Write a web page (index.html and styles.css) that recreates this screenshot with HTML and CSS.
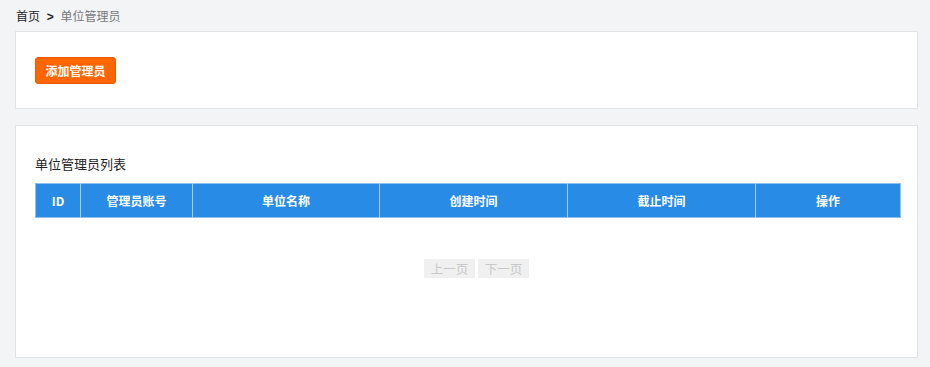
FILE: index.html
```html
<!DOCTYPE html>
<html lang="zh-CN">
<head>
  <meta charset="UTF-8">
  <title>单位管理员</title>
  <link rel="stylesheet" href="styles.css">
</head>
<body>

  <div class="crumb">
    <span class="crumb-home">首页</span>
    <span class="crumb-sep">&gt;</span>
    <span class="crumb-cur">单位管理员</span>
  </div>

  <div class="panel panel-top">
    <button class="add-btn">添加管理员</button>
  </div>

  <div class="panel panel-list">
    <h3 class="list-title">单位管理员列表</h3>
    <table class="admin-table">
      <thead>
        <tr>
          <th class="col-id">ID</th>
          <th class="col-account">管理员账号</th>
          <th class="col-unit">单位名称</th>
          <th class="col-time">创建时间</th>
          <th class="col-time">截止时间</th>
          <th>操作</th>
        </tr>
      </thead>
      <tbody></tbody>
    </table>

    <div class="pager">
      <button class="pager-btn" disabled>上一页</button>
      <button class="pager-btn" disabled>下一页</button>
    </div>
  </div>

</body>
</html>
```

FILE: styles.css
```css
body {
  margin: 0;
  padding: 0 12px 0 15px;
  background: #f3f4f6;
  color: #333;
  font-family: "Noto Sans CJK SC", "Liberation Sans", sans-serif;
  font-size: 12px;
}

.crumb {
  height: 31px;
  line-height: 31px;
  padding-left: 1px;
  color: #222;
}

.crumb-sep {
  margin: 0 4px;
  font-weight: bold;
  font-family: "Liberation Sans", sans-serif;
}

.crumb-cur {
  color: #777;
}

.panel {
  background: #fff;
  border: 1px solid #e2e3e5;
  box-sizing: border-box;
}

.panel-top {
  height: 78px;
  padding: 25px 19px 0;
}

.add-btn {
  width: 81px;
  height: 27px;
  background: #ff6600;
  border: 1px solid #e85c00;
  border-radius: 3px;
  color: #fff;
  font-family: inherit;
  font-size: 12px;
  font-weight: bold;
  cursor: pointer;
  padding: 0;
}

.panel-list {
  margin-top: 16px;
  height: 233px;
  padding: 0 17px 0 19px;
}

.list-title {
  margin: 30px 0 12px;
  font-size: 13px;
  font-weight: normal;
  color: #222;
  line-height: 15px;
}

.admin-table {
  width: 866px;
  border-collapse: collapse;
  border: 1px solid #8fc1ef;
}

.admin-table th {
  height: 33px;
  padding: 0;
  background: #288be6;
  color: #fff;
  font-weight: bold;
  font-size: 12px;
  border-left: 1px solid #a9d0f3;
}

.admin-table th:first-child {
  border-left: none;
}

.col-id { width: 44px; }
.col-account { width: 111px; }
.col-unit { width: 186px; }
.col-time { width: 187px; }

.pager {
  display: flex;
  justify-content: center;
  gap: 3px;
  margin-top: 41px;
  padding-left: 18px;
}

.pager-btn {
  width: 51px;
  height: 19px;
  padding: 0;
  border: none;
  background: #f0f0f0;
  color: #c8c8c8;
  font-family: inherit;
  font-size: 12.5px;
}
```
